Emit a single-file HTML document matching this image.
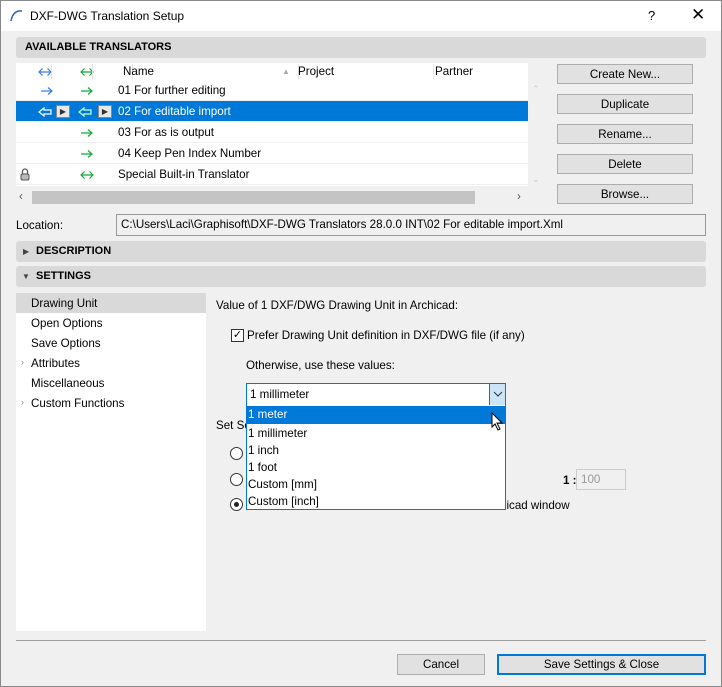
<!DOCTYPE html>
<html><head><meta charset="utf-8"><style>
*{box-sizing:border-box;margin:0;padding:0}
body{width:722px;height:687px;overflow:hidden;background:#f0f0f0;font-family:"Liberation Sans",sans-serif;font-size:11.6px;color:#000;position:relative}
.a{position:absolute}
.win{left:0;top:0;width:722px;height:687px;border:1px solid #888}
.tb{left:1px;top:1px;width:720px;height:30px;background:#fff}
.sec{background:#d9d9d9;border-radius:3px;font-weight:bold;font-size:11px;padding-left:9px;line-height:21px}
.btn{background:#e1e1e1;border:1px solid #adadad;text-align:center;line-height:20px}
.row{left:16px;width:512px;height:21px;border-bottom:1px solid #f0f0f0;line-height:21px}
.t{white-space:nowrap}
</style></head><body>
<svg width="0" height="0" style="position:absolute"><defs>
<symbol id="ra" viewBox="0 0 14 10"><path d="M1 5H12M8 1.5L12 5L8 8.5" fill="none" stroke="currentColor" stroke-width="1.2"/></symbol>
<symbol id="ba" viewBox="0 0 14 10"><path d="M1 5H13M4.5 1.5L1 5L4.5 8.5M9.5 1.5L13 5L9.5 8.5" fill="none" stroke="currentColor" stroke-width="1.2"/></symbol>
<symbol id="la" viewBox="0 0 14 10"><path d="M6 1L1 5L6 9V7H13V3H6Z" fill="none" stroke="currentColor" stroke-width="1.2"/></symbol>
</defs></svg>
<div class="a win"></div>
<div class="a tb"></div>
<svg class="a" style="left:9px;top:8px" width="14" height="14"><path d="M2 13 Q4 2 13 3" fill="none" stroke="#3260b8" stroke-width="1.5"/></svg>
<div class="a t" style="left:30px;top:9px;font-size:12px">DXF-DWG Translation Setup</div>
<div class="a" style="left:648px;top:8px;font-size:13px">?</div>
<div class="a" style="left:691px;top:5px;font-size:17px">✕</div>

<div class="a sec" style="left:16px;top:37px;width:690px;height:21px">AVAILABLE TRANSLATORS</div>
<div class="a" style="left:16px;top:63px;width:512px;height:123px;background:#fff"></div>
<div class="a" style="left:16px;top:63px;width:512px;height:17px;line-height:17px">
<svg class="a" style="left:22px;top:4px;color:#3a7ee8" width="14" height="10"><use href="#ba"/></svg>
<svg class="a" style="left:64px;top:4px;color:#18a83c" width="14" height="10"><use href="#ba"/></svg>
<span class="a" style="left:35px;top:1px;width:1px;height:15px;background:#e5e5e5"></span>
<span class="a" style="left:76px;top:1px;width:1px;height:15px;background:#e5e5e5"></span>
<span class="a" style="left:116px;top:1px;width:1px;height:15px;background:#e5e5e5"></span>
<span class="a" style="left:107px">Name</span><span class="a" style="left:266px;color:#aaa;font-size:8px">▲</span>
<span class="a" style="left:282px;top:1px;width:1px;height:15px;background:#e5e5e5"></span>
<span class="a" style="left:282px">Project</span>
<span class="a" style="left:417px;top:1px;width:1px;height:15px;background:#e5e5e5"></span>
<span class="a" style="left:419px">Partner</span></div>
<div class="a row" style="top:80px"><svg class="a" style="left:24px;top:6px;color:#3a7ee8" width="14" height="10"><use href="#ra"/></svg><svg class="a" style="left:64px;top:6px;color:#18a83c" width="14" height="10"><use href="#ra"/></svg><span class="a" style="left:102px">01 For further editing</span></div>
<div class="a row" style="top:101px;background:#0078d7;color:#fff"><svg class="a" style="left:22px;top:6px;color:#fff" width="14" height="10"><use href="#la"/></svg><span class="a" style="left:40px;top:4px;width:14px;height:13px;background:#e8e8e8;border:1px solid #888;color:#333;font-size:8px;line-height:11px;text-align:center">▶</span><svg class="a" style="left:62px;top:6px;color:#c8ffc8" width="14" height="10"><use href="#la"/></svg><span class="a" style="left:82px;top:4px;width:14px;height:13px;background:#e8e8e8;border:1px solid #888;color:#333;font-size:8px;line-height:11px;text-align:center">▶</span><span class="a" style="left:102px">02 For editable import</span></div>
<div class="a row" style="top:122px"><svg class="a" style="left:64px;top:6px;color:#18a83c" width="14" height="10"><use href="#ra"/></svg><span class="a" style="left:102px">03 For as is output</span></div>
<div class="a row" style="top:143px"><svg class="a" style="left:64px;top:6px;color:#18a83c" width="14" height="10"><use href="#ra"/></svg><span class="a" style="left:102px">04 Keep Pen Index Number</span></div>
<div class="a row" style="top:164px"><svg class="a" style="left:4px;top:3px" width="10" height="14"><path d="M2.5 7V4.5a2.5 2.5 0 0 1 5 0V7" fill="none" stroke="#555" stroke-width="1.2"/><rect x="1" y="7" width="8" height="6" rx="1.5" fill="#bbb" stroke="#555"/></svg><svg class="a" style="left:64px;top:6px;color:#18a83c" width="14" height="10"><use href="#ba"/></svg><span class="a" style="left:102px">Special Built-in Translator</span></div>
<div class="a" style="left:32px;top:191px;width:443px;height:13px;background:#c4c4c4"></div>
<div class="a" style="left:19px;top:190px;color:#555">‹</div><div class="a" style="left:517px;top:190px;color:#555">›</div>
<div class="a" style="left:532px;top:84px;color:#ccc;font-size:9px">⌃</div><div class="a" style="left:532px;top:174px;color:#ccc;font-size:9px">⌄</div>

<div class="a btn" style="left:557px;top:64px;width:136px;height:20px">Create New...</div>
<div class="a btn" style="left:557px;top:94px;width:136px;height:20px">Duplicate</div>
<div class="a btn" style="left:557px;top:124px;width:136px;height:20px">Rename...</div>
<div class="a btn" style="left:557px;top:154px;width:136px;height:20px">Delete</div>
<div class="a btn" style="left:557px;top:184px;width:136px;height:20px">Browse...</div>

<div class="a" style="left:16px;top:219px">Location:</div>
<div class="a t" style="left:116px;top:214px;width:590px;height:22px;border:1px solid #999;background:#f0f0f0;padding-left:4px;line-height:20px">C:\Users\Laci\Graphisoft\DXF-DWG Translators 28.0.0 INT\02 For editable import.Xml</div>

<div class="a sec" style="left:16px;top:241px;width:690px;height:21px;padding-left:20px">DESCRIPTION</div>
<div class="a" style="left:23px;top:241px;font-size:8px;line-height:21px;color:#444">▶</div>
<div class="a sec" style="left:16px;top:266px;width:690px;height:21px;padding-left:20px">SETTINGS</div>
<div class="a" style="left:22px;top:266px;font-size:8px;line-height:21px;color:#444">▼</div>

<div class="a" style="left:16px;top:293px;width:190px;height:338px;background:#fff"></div>
<div class="a" style="left:16px;top:293px;width:190px;height:20px;background:#d9d9d9"></div>
<div class="a" style="left:31px;top:297px">Drawing Unit</div>
<div class="a" style="left:31px;top:317px">Open Options</div>
<div class="a" style="left:31px;top:337px">Save Options</div>
<div class="a" style="left:21px;top:357px;color:#888;font-size:9px">›</div><div class="a" style="left:31px;top:357px">Attributes</div>
<div class="a" style="left:31px;top:377px">Miscellaneous</div>
<div class="a" style="left:21px;top:397px;color:#888;font-size:9px">›</div><div class="a" style="left:31px;top:397px">Custom Functions</div>

<div class="a" style="left:216px;top:299px">Value of 1 DXF/DWG Drawing Unit in Archicad:</div>
<div class="a" style="left:231px;top:329px;width:13px;height:13px;border:1px solid #333;background:#fff;font-size:11px;line-height:11px;text-align:center">✓</div>
<div class="a" style="left:247px;top:329px">Prefer Drawing Unit definition in DXF/DWG file (if any)</div>
<div class="a" style="left:246px;top:359px">Otherwise, use these values:</div>
<div class="a" style="left:216px;top:419px">Set Sc</div>
<div class="a" style="left:230px;top:447px;width:13px;height:13px;border:1px solid #333;border-radius:50%;background:#fff"></div>
<div class="a" style="left:230px;top:473px;width:13px;height:13px;border:1px solid #333;border-radius:50%;background:#fff"></div>
<div class="a" style="left:230px;top:498px;width:13px;height:13px;border:1px solid #333;border-radius:50%;background:#fff"><div class="a" style="left:3px;top:3px;width:5px;height:5px;border-radius:50%;background:#222"></div></div>
<div class="a" style="left:500px;top:499px">hicad window</div>
<div class="a" style="left:563px;top:474px;font-weight:bold">1 :</div>
<div class="a" style="left:576px;top:469px;width:50px;height:21px;border:1px solid #ccc;color:#999;padding-left:4px;line-height:19px">100</div>

<div class="a" style="left:246px;top:383px;width:260px;height:127px;border:1px solid #0078d7;background:#fff"></div>
<div class="a" style="left:247px;top:384px;width:258px;height:21px;line-height:21px;padding-left:3px">1 millimeter</div>
<div class="a" style="left:489px;top:384px;width:16px;height:21px;background:#cce4f7;border-left:1px solid #0078d7"><svg class="a" style="left:3px;top:7px" width="10" height="7"><path d="M1 1L5 5L9 1" fill="none" stroke="#333"/></svg></div>
<div class="a" style="left:247px;top:406px;width:258px;height:18px;background:#0078d7;color:#fff;line-height:18px;padding-left:1px">1 meter</div>
<div class="a" style="left:248px;top:427px">1 millimeter</div>
<div class="a" style="left:248px;top:444px">1 inch</div>
<div class="a" style="left:248px;top:461px">1 foot</div>
<div class="a" style="left:248px;top:478px">Custom [mm]</div>
<div class="a" style="left:248px;top:495px">Custom [inch]</div>
<svg class="a" style="left:491px;top:412px" width="14" height="20"><path d="M1 1 L1 15 L4 12 L7 18 L9 17 L6 11 L11 11 Z" fill="#fff" stroke="#000"/></svg>

<div class="a" style="left:16px;top:640px;width:690px;height:1px;background:#a0a0a0"></div>
<div class="a btn" style="left:397px;top:654px;width:88px;height:21px;line-height:20px">Cancel</div>
<div class="a btn" style="left:497px;top:654px;width:209px;height:21px;line-height:18px;border:2px solid #0078d7">Save Settings &amp; Close</div>
</body></html>
